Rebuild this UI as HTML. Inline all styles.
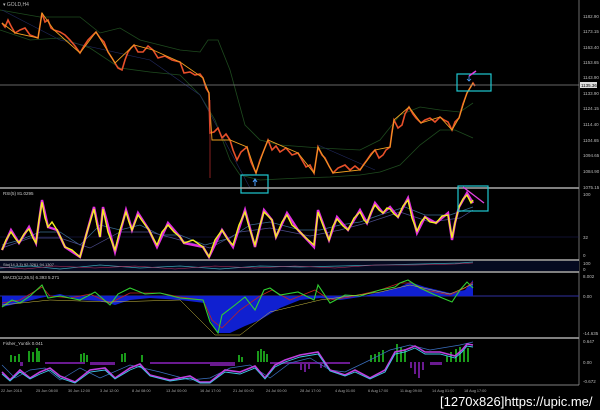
<!DOCTYPE html>
<html><head><meta charset="utf-8"><style>
html,body{margin:0;padding:0;background:#000;width:600px;height:410px;overflow:hidden}
svg{display:block}
text{font-family:"Liberation Sans",sans-serif}
</style></head><body>
<svg width="600" height="410" viewBox="0 0 600 410" xmlns="http://www.w3.org/2000/svg">
<rect width="600" height="410" fill="#000"/>
<text x="3" y="6" font-size="5" fill="#bbb">▾ GOLD,H4</text>
<polyline fill="none" stroke="#1e4a1e" stroke-width="0.8" points="0,10 40,17 80,17 100,33 120,28 140,40 180,50 200,52 208,40 218,40 230,70 245,125 260,140 280,145 320,148 360,150 380,140 400,115 420,107 440,110 460,112 473,103"/>
<polyline fill="none" stroke="#1e4a1e" stroke-width="0.8" points="0,30 30,40 60,38 90,48 120,68 150,72 180,75 200,95 215,120 230,160 240,175 260,180 300,178 330,177 360,175 380,172 400,165 420,145 440,130 455,130 473,138"/>
<polyline fill="none" stroke="#222a60" stroke-width="0.6" points="2,10 60,40 150,60 200,95 250,188"/>
<polyline fill="none" stroke="#222a60" stroke-width="0.6" points="318,145 375,170"/>
<polyline fill="none" stroke="#e8502a" stroke-width="1.6" points="2,23 5,27 8,20 11,26 15,33 20,30 25,28 30,35 38,38 42,13 45,22 48,20 51,28 54,30 60,32 65,35 70,40 75,46 80,53 84,46 88,40 92,36 96,32 100,38 104,42 108,52 112,58 115,63 118,68 122,70 125,60 128,52 131,48 134,45 138,52 143,52 148,46 153,50 158,58 165,56 172,60 180,62 184,73 190,72 195,75 200,74 203,78 206,88 209,93 210,133 214,132 218,128 222,138 226,134 230,140 233,150 237,160 241,152 247,147 251,162 256,173 260,160 264,150 266,145 268,140 272,150 276,146 280,152 286,148 292,155 298,153 302,160 306,167 310,165 314,173 316,160 318,147 322,155 325,158 329,166 333,173 338,168 345,165 350,170 355,166 360,170 364,164 367,160 371,154 375,150 379,158 383,155 386,150 390,147 392,132 394,120 398,128 402,125 405,114 409,107 413,114 416,118 421,123 425,120 430,118 435,122 440,117 444,120 448,122 452,130 455,122 459,118 463,104 467,93 470,88 473,83 475,86"/>
<polyline fill="none" stroke="#f0a020" stroke-width="0.9" points="2,23 15,33 38,38 42,13 54,30 80,53 96,32 115,63 134,45 153,50 180,62 203,78 209,93 212,140 230,140 247,147 256,173 264,150 268,140 298,153 314,173 318,147 333,173 360,170 375,150 390,147 394,120 409,107 421,123 440,117 452,130 459,118 467,93 473,83"/>
<line x1="210" y1="100" x2="210" y2="178" stroke="#c03030" stroke-width="0.7"/>
<line x1="0" y1="85" x2="579" y2="85" stroke="#888" stroke-width="0.7"/>
<rect x="241" y="175" width="27" height="18" fill="none" stroke="#1fc8d0" stroke-width="1.2"/>
<rect x="457" y="74" width="34" height="17" fill="none" stroke="#1fc8d0" stroke-width="1.2"/>
<path d="M255 186 V180 M253 182 L255 179 L257 182" stroke="#4aa0ff" stroke-width="1" fill="none"/>
<path d="M469 76 L476 71" stroke="#e040e0" stroke-width="1.5"/>
<path d="M469 76 V81 M467 79 L469 81 L471 79" stroke="#4aa0ff" stroke-width="0.8" fill="none"/>
<line x1="579" y1="0" x2="579" y2="385" stroke="#999" stroke-width="0.7"/>
<g font-size="4.5" fill="#bbb">
<text x="583" y="18">1182.90</text><text x="583" y="33">1173.15</text><text x="583" y="49">1163.40</text><text x="583" y="64">1153.65</text><text x="583" y="79">1143.90</text><text x="583" y="95">1133.90</text><text x="583" y="110">1124.15</text><text x="583" y="126">1114.40</text><text x="583" y="142">1104.65</text><text x="583" y="157">1094.65</text><text x="583" y="173">1084.90</text><text x="583" y="189">1075.15</text>
<text x="583" y="196">100</text><text x="583" y="239">32</text><text x="583" y="257">0</text>
<text x="583" y="265">100</text><text x="583" y="271">0</text>
<text x="583" y="278">8.002</text><text x="583" y="298">0.00</text><text x="583" y="335">-14.635</text>
<text x="583" y="343">0.647</text><text x="583" y="364">0.00</text><text x="583" y="383">-0.672</text>
</g>
<rect x="580" y="82" width="17" height="6" fill="#ddd"/>
<text x="581" y="87" font-size="4.5" fill="#000">1135.36</text>
<g stroke="#aaa" stroke-width="1.5">
<line x1="0" y1="188" x2="579" y2="188"/><line x1="0" y1="260" x2="579" y2="260"/><line x1="0" y1="272" x2="579" y2="272"/><line x1="0" y1="338" x2="579" y2="338"/>
</g>
<line x1="0" y1="385" x2="579" y2="385" stroke="#aaa" stroke-width="0.8"/>
<text x="3" y="195" font-size="4.5" fill="#ccc">RSI(5) 81.0295</text>
<line x1="0" y1="237" x2="579" y2="237" stroke="#202060" stroke-width="0.5"/>
<polyline fill="none" stroke="#3a6a90" stroke-width="0.7" points="2,245 20,240 40,232 60,232 80,245 100,225 120,230 140,225 160,235 180,235 205,245 230,238 250,225 270,222 300,230 320,230 340,225 360,222 380,215 405,207 425,215 450,215 473,207"/>
<polyline fill="none" stroke="#4a4a8a" stroke-width="0.7" points="2,248 30,238 60,238 90,248 120,232 150,232 180,240 210,248 240,232 270,228 310,236 340,230 370,222 400,212 430,222 460,218 473,210"/>
<polyline fill="none" stroke="#e030e0" stroke-width="2.4" points="2,250 11,230 19,243 29,227 36,243 42,200 48,227 57,230 65,247 80,257 94,207 100,237 103,207 115,252 126,210 132,230 138,213 149,230 157,247 168,223 180,237 184,243 203,247 209,257 222,230 233,247 245,210 255,247 264,210 272,220 276,237 287,213 298,230 314,247 318,210 329,240 337,217 348,230 360,210 367,223 375,203 383,213 390,207 398,217 408,198 417,233 425,217 436,223 448,213 452,240 455,223 459,207 467,193 473,203"/>
<polyline fill="none" stroke="#f4f020" stroke-width="1.4" points="2,250 6,240 11,232 15,238 19,243 24,234 29,229 33,238 36,243 39,220 42,202 45,218 48,227 52,222 57,230 61,238 65,247 72,250 80,257 87,232 94,209 97,225 100,237 103,209 108,232 115,250 120,230 126,212 129,222 132,230 138,215 143,222 149,230 153,238 157,245 162,232 168,225 174,232 180,237 184,243 193,240 203,247 209,257 215,240 222,230 228,240 233,245 239,225 245,212 250,230 255,245 260,225 264,212 268,216 272,220 276,237 282,222 287,215 292,225 298,230 306,238 314,245 318,212 324,228 329,240 333,226 337,219 343,226 348,230 354,218 360,212 364,220 367,223 371,212 375,205 379,210 383,213 387,208 390,209 394,214 398,217 403,206 408,200 412,218 417,231 421,222 425,217 430,222 436,223 442,216 448,215 452,238 455,223 459,207 463,199 467,195 471,203 473,200"/>
<rect x="458" y="186" width="30" height="25" fill="none" stroke="#1fc8d0" stroke-width="1.2"/>
<path d="M463 187 L484 203" stroke="#e040e0" stroke-width="1.3"/>
<rect x="0" y="261" width="579" height="10" fill="#050a20"/>
<text x="3" y="266" font-size="4" fill="#ccc">Sto(14,3,3) 92.3261 94.1307</text>
<polyline fill="none" stroke="#3aa0b0" stroke-width="0.7" points="0,268 30,266 60,269 100,265 140,268 180,266 220,269 260,266 300,267 340,266 380,265 420,264 460,263 473,262"/>
<polyline fill="none" stroke="#c03060" stroke-width="0.6" points="0,267 25,269 55,266 95,268 135,266 175,269 215,266 255,268 295,266 335,268 375,265 415,265 455,264 473,263"/>
<text x="3" y="279" font-size="4.5" fill="#ccc">MACD(12,26,5) 6.393 5.271</text>
<line x1="0" y1="296" x2="579" y2="296" stroke="#3030a0" stroke-width="1"/>
<polygon fill="#1020d0" points="2,296 2,307 20,303 40,298 60,294 80,300 100,301 115,305 130,300 150,298 180,300 205,303 210,320 218,333 230,333 245,326 260,320 280,308 300,300 320,298 340,300 360,297 380,292 400,287 410,282 425,287 450,293 465,290 473,280 473,296"/>
<polyline fill="none" stroke="#c02020" stroke-width="0.8" points="2,303 20,300 42,287 50,296 70,298 90,294 110,303 130,293 160,293 180,297 203,300 212,320 222,328 240,310 260,296 272,290 290,300 315,290 330,300 350,297 380,290 400,283 412,283 425,290 450,295 465,288 473,282"/>
<polyline fill="none" stroke="#30d030" stroke-width="1.1" points="2,307 12,300 20,303 30,296 42,285 48,298 60,296 80,300 95,292 110,305 118,294 130,288 145,294 160,293 180,298 203,300 210,322 218,333 222,315 235,305 245,297 255,310 264,290 270,288 280,295 298,292 314,300 318,285 330,303 345,295 360,296 380,290 395,287 400,283 408,280 420,288 435,295 452,302 460,290 467,282 473,288"/>
<polyline fill="none" stroke="#d0c040" stroke-width="0.5" points="2,305 50,300 110,302 180,300 215,335 240,335 270,312 320,300 380,292 410,285 450,294 473,284"/>
<text x="3" y="345" font-size="4.5" fill="#ccc">Fisher_Yur4ik 0.041</text>
<g fill="#1a9a1a">
<rect x="10" y="355" width="2" height="7"/><rect x="14" y="356" width="2" height="6"/><rect x="18" y="354" width="2" height="8"/><rect x="28" y="351" width="2" height="11"/><rect x="32" y="352" width="2" height="10"/><rect x="36" y="348" width="2" height="14"/><rect x="38" y="351" width="2" height="11"/>
<rect x="80" y="354" width="2" height="8"/><rect x="83" y="353" width="2" height="9"/><rect x="86" y="355" width="2" height="7"/><rect x="121" y="354" width="2" height="8"/><rect x="124" y="353" width="2" height="9"/><rect x="141" y="355" width="2" height="7"/>
<rect x="238" y="355" width="2" height="7"/><rect x="241" y="357" width="2" height="5"/><rect x="257" y="351" width="2" height="11"/><rect x="260" y="349" width="2" height="13"/><rect x="263" y="351" width="2" height="11"/><rect x="266" y="354" width="2" height="8"/>
<rect x="370" y="355" width="2" height="7"/><rect x="374" y="354" width="2" height="8"/><rect x="378" y="352" width="2" height="10"/><rect x="382" y="350" width="2" height="12"/><rect x="396" y="344" width="2" height="18"/><rect x="400" y="347" width="2" height="15"/><rect x="404" y="349" width="2" height="13"/><rect x="446" y="356" width="2" height="6"/><rect x="450" y="352" width="2" height="10"/><rect x="455" y="349" width="2" height="13"/><rect x="459" y="347" width="2" height="15"/><rect x="463" y="350" width="2" height="12"/><rect x="467" y="348" width="2" height="14"/>
</g>
<g fill="#6a1a90">
<rect x="20" y="362" width="3" height="4"/><rect x="45" y="362" width="40" height="2"/><rect x="90" y="362" width="25" height="3"/><rect x="150" y="362" width="60" height="2"/><rect x="210" y="362" width="25" height="4"/><rect x="270" y="362" width="80" height="2"/><rect x="300" y="362" width="2" height="8"/><rect x="304" y="362" width="2" height="10"/><rect x="308" y="362" width="2" height="7"/><rect x="320" y="362" width="2" height="6"/><rect x="324" y="362" width="2" height="5"/><rect x="410" y="362" width="2" height="6"/><rect x="414" y="362" width="2" height="12"/><rect x="418" y="362" width="2" height="16"/><rect x="422" y="362" width="2" height="8"/><rect x="430" y="362" width="12" height="3"/>
</g>
<polyline fill="none" stroke="#3a70c0" stroke-width="0.7" points="2,365 15,378 30,370 45,368 60,380 80,368 100,378 130,365 160,372 190,380 210,378 230,368 250,365 270,378 290,363 310,358 330,370 345,372 370,360 390,350 410,345 430,350 460,345 473,342"/>
<polyline fill="none" stroke="#c040e0" stroke-width="1.6" points="2,372 10,380 20,370 30,378 40,372 50,368 60,376 75,382 90,370 105,368 115,378 130,368 140,364 150,375 170,380 190,376 200,382 210,382 225,370 240,372 255,366 265,378 275,365 285,360 300,355 318,352 330,370 345,375 355,370 370,378 385,370 395,352 405,350 415,346 425,352 440,352 455,356 462,350 467,344 473,345"/>
<polyline fill="none" stroke="#40c8e8" stroke-width="0.9" points="2,374 10,381 20,372 30,379 40,374 50,370 60,378 75,383 90,372 105,370 115,379 130,370 140,366 150,376 170,381 190,378 200,383 210,383 225,372 240,374 255,368 265,379 275,367 285,362 300,357 318,354 330,371 345,376 355,372 370,379 385,372 395,354 405,352 415,348 425,354 440,354 455,358 462,352 467,346 473,347"/>
<g font-size="3.8" fill="#aaa">
<text x="1" y="392">22 Jun 2015</text><text x="36" y="392">25 Jun 08:00</text><text x="68" y="392">30 Jun 12:00</text><text x="100" y="392">3 Jul 12:00</text><text x="132" y="392">8 Jul 08:00</text><text x="166" y="392">13 Jul 00:00</text><text x="200" y="392">16 Jul 17:00</text><text x="233" y="392">21 Jul 00:00</text><text x="266" y="392">24 Jul 00:00</text><text x="300" y="392">28 Jul 17:00</text><text x="335" y="392">4 Aug 01:00</text><text x="368" y="392">6 Aug 17:00</text><text x="400" y="392">11 Aug 09:00</text><text x="432" y="392">14 Aug 01:00</text><text x="464" y="392">18 Aug 17:00</text>
</g>
<text x="440" y="406" font-size="13" fill="#fff">[1270x826]https://upic.me/</text>
</svg>
</body></html>
